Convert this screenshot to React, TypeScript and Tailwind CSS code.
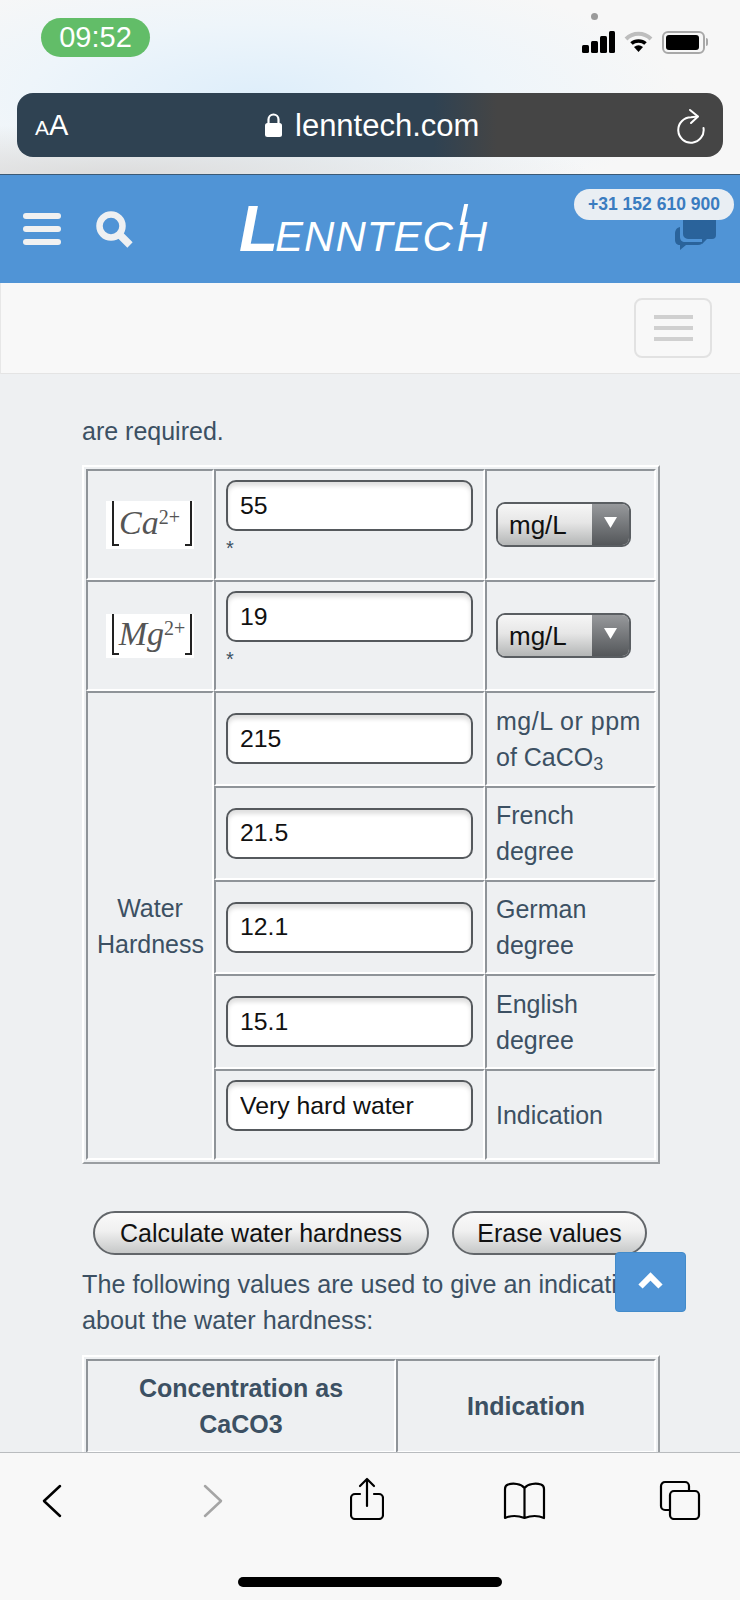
import React from 'react';

const cellCls = "border-2 border-t-[#8f9499] border-l-[#8f9499] border-r-white border-b-white p-[9px] text-[25px] leading-[36px] text-[#3c5063]";
const tableCls = "w-[578px] table-fixed border-separate border-spacing-0 border-2 border-t-white border-l-white border-r-[#9a9ea2] border-b-[#9a9ea2] p-[2px]";

function Input({ value }: { value: string }) {
  return (
    <input
      readOnly
      value={value}
      className="block w-[247px] h-[51px] rounded-[10px] border-2 border-[#55595d] bg-white px-[12px] text-[24.800px] text-[#111] shadow-[inset_0_4px_4px_rgba(0,0,0,0.13)] outline-none"
    />
  );
}

function Select() {
  return (
    <div className="flex h-[45px] w-[135px] overflow-hidden rounded-[9px] border-2 border-[#5a5e62] text-[26px] text-[#111]">
      <div className="flex flex-1 items-center bg-[linear-gradient(#f6f6f6,#e6e6e6_45%,#b4b6b6)] pl-[11px]">mg/L</div>
      <div className="flex w-[37px] items-start justify-center bg-[linear-gradient(#97999c,#54575a)] pt-[13px]">
        <svg width="13" height="11" viewBox="0 0 13 11"><path d="M0 0h13L6.500 11z" fill="#fff" /></svg>
      </div>
    </div>
  );
}

function Formula({ base, h }: { base: string; h: string }) {
  return (
    <div className={`mx-auto flex w-[88px] items-stretch bg-white pb-[3px] pl-[6px] pr-[2px] font-['Liberation_Serif',serif] text-[#555] ${h}`}>
      <span className="w-[7px] border-b-2 border-l-2 border-[#222]" />
      <span className="flex-1 self-center whitespace-nowrap text-[34px] italic leading-none">
        {base}
        <sup className="text-[20px] not-italic">2+</sup>
      </span>
      <span className="w-[7px] border-b-2 border-r-2 border-[#222]" />
    </div>
  );
}

function HardnessRow({ value, unit, h }: { value: string; unit: React.ReactNode; h: string }) {
  return (
    <>
      <td className={`${cellCls} ${h} pl-[10px]`}><Input value={value} /></td>
      <td className={`${cellCls} ${h} text-[25.500px]`}>{unit}</td>
    </>
  );
}

function StatusIcons() {
  return (
    <div className="flex items-center gap-[9px]">
      <svg width="33" height="22" viewBox="0 0 33 22" fill="#000">
        <rect x="0" y="14" width="7" height="8" rx="1.500" />
        <rect x="9" y="10" width="7" height="12" rx="1.500" />
        <rect x="18" y="5" width="7" height="17" rx="1.500" />
        <rect x="27" y="0" width="6" height="22" rx="1.500" />
      </svg>
      <svg width="29" height="22" viewBox="0 0 29 22" fill="none">
        <path d="M2 8C9 1 20 1 27 8" stroke="#bdbdbd" strokeWidth="4" />
        <path d="M7.500 12.500C11 9 18 9 21.500 12.500" stroke="#000" strokeWidth="3.500" />
        <path d="M10 16Q14.500 12.500 19 16L14.500 21z" fill="#000" />
      </svg>
      <div className="flex items-center">
        <div className="h-[23px] w-[43px] rounded-[6px] border-2 border-[#a8a8a8] p-[2px]">
          <div className="h-full w-[33px] rounded-[3px] bg-black" />
        </div>
        <div className="ml-[1px] h-[8px] w-[2px] rounded-r bg-[#a8a8a8]" />
      </div>
    </div>
  );
}

export default function App() {
  return (
    <div className="relative h-[1600px] w-[740px] overflow-hidden bg-[#eef0f2] font-['Liberation_Sans',Arial,sans-serif]">
      {/* safari top */}
      <div className="relative h-[175px] border-b border-[#3c5a75] bg-[radial-gradient(ellipse_480px_50px_at_15%_100%,#dcdcdc_0%,rgba(220,220,220,0)_100%),radial-gradient(ellipse_420px_130px_at_35%_55%,#deeefa_0%,#eef5fa_55%,#f7f7f7_100%)] px-[17px] pt-[18px]">
        <div className="flex h-[39px] items-center justify-between pl-[24px] pr-[15px]">
          <div className="flex h-[39px] w-[109px] items-center justify-center rounded-full bg-[#62bd68] text-[29px] text-white">09:52</div>
          <div className="mt-[9px]"><StatusIcons /></div>
        </div>
        <div className="absolute left-[591px] top-[13px] h-[7px] w-[7px] rounded-full bg-[#9a9a9a]" />
        <div className="mt-[36px] flex h-[64px] w-[706px] items-center rounded-[16px] bg-[linear-gradient(90deg,#2f4252_0%,#2f4252_59%,#454545_68%,#454545_100%)] text-white">
          <div className="flex w-[248px] items-baseline pl-[18px]">
            <span className="text-[21px] leading-none">A</span>
            <span className="text-[29px] leading-none">A</span>
          </div>
          <svg width="17" height="24" viewBox="0 0 17 24" fill="#fff">
            <path d="M3.500 11V6.500a5 5 0 0 1 10 0V11" fill="none" stroke="#fff" strokeWidth="2.200" />
            <rect x="0" y="10" width="17" height="14" rx="2.500" />
          </svg>
          <span className="ml-[13px] text-[31px] leading-none">lenntech.com</span>
          <svg className="ml-auto mr-[17px] mt-[2px]" width="29" height="36" viewBox="0 0 29 36" fill="none" stroke="#fff" strokeWidth="2" strokeLinecap="round" strokeLinejoin="round">
            <path d="M13 2l8 6.500-7 6.500" />
            <path d="M20.500 8.500L14 9.300A12.700 12.700 0 1 0 26.500 20" />
          </svg>
        </div>
      </div>

      {/* site header */}
      <div className="relative flex h-[108px] items-center bg-[#5094d6] text-white">
        <div className="ml-[23px] flex w-[38px] flex-col gap-[7px]">
          <span className="h-[6px] rounded-[3px] bg-[#f1f1f1]" />
          <span className="h-[6px] rounded-[3px] bg-[#f1f1f1]" />
          <span className="h-[6px] rounded-[3px] bg-[#f1f1f1]" />
        </div>
        <svg className="ml-[35px]" width="37" height="37" viewBox="0 0 37 37" fill="none" stroke="#eef0f2">
          <circle cx="15" cy="15" r="11.500" strokeWidth="6.500" />
          <path d="M24 24l10 10" strokeWidth="7.500" />
        </svg>
        <div className="ml-[106px] mt-[-1px] flex items-baseline whitespace-nowrap italic leading-none text-white">
          <span className="text-[64px] font-bold tracking-[-3px]">L</span>
          <span className="text-[42px] tracking-[1px]">ENNTEC</span>
          <span className="relative ml-[3px] text-[42px]">
            H
            <span className="absolute left-[5px] top-[-12px] h-[21px] w-[4px] -skew-x-12 bg-white" />
          </span>
        </div>
        <div className="absolute left-[574px] top-[14px] z-10 flex h-[31px] w-[160px] items-center justify-center rounded-full bg-[#e9eef3] text-[17.500px] font-bold text-[#3a7cc0]">+31 152 610 900</div>
        <svg className="absolute left-[675px] top-[45px]" width="43" height="31" viewBox="0 0 43 31" fill="#2a639b">
          <path d="M8 0H41V15a4 4 0 0 1-4 4H32l-5 5v-5H13a5 5 0 0 1-5-5z" />
          <path d="M5 7C1 8 0 11 0 14v6c0 3 2 5 5 5v5l6-5h12c3 0 4-1 5-3H10c-3 0-5-2-5-5z" />
        </svg>
      </div>

      {/* navbar */}
      <div className="flex h-[91px] justify-end border-b border-[#e4e4e4] border-l border-l-[#e7e7e7] bg-[#f8f8f8] pr-[28px] pt-[15px]">
        <div className="flex h-[60px] w-[78px] flex-col items-center justify-center gap-[7px] rounded-[8px] border-2 border-[#e2e2e2]">
          <span className="h-[4px] w-[39px] bg-[#d0d0d0]" />
          <span className="h-[4px] w-[39px] bg-[#d0d0d0]" />
          <span className="h-[4px] w-[39px] bg-[#d0d0d0]" />
        </div>
      </div>

      {/* content */}
      <div className="pl-[82px] text-[25px] leading-[36px] text-[#3c5063]">
        <p className="mt-[39px]">are required.</p>

        <table className={`mt-[16px] ${tableCls}`}>
          <colgroup>
            <col className="w-[128px]" />
            <col className="w-[271px]" />
            <col className="w-[171px]" />
          </colgroup>
          <tbody>
            <tr>
              <td className={`${cellCls} h-[111px]`}><Formula base="Ca" h="h-[48px]" /></td>
              <td className={`${cellCls} h-[111px] pl-[10px] align-top`}>
                <Input value="55" />
                <div className="mt-[6px] text-[20px] leading-[22px]">*</div>
              </td>
              <td className={`${cellCls} h-[111px]`}><Select /></td>
            </tr>
            <tr>
              <td className={`${cellCls} h-[111px]`}><Formula base="Mg" h="h-[44px]" /></td>
              <td className={`${cellCls} h-[111px] pl-[10px] align-top`}>
                <Input value="19" />
                <div className="mt-[6px] text-[20px] leading-[22px]">*</div>
              </td>
              <td className={`${cellCls} h-[111px]`}><Select /></td>
            </tr>
            <tr>
              <td rowSpan={5} className={`${cellCls} text-center text-[24.500px]`}>Water<br />Hardness</td>
              <HardnessRow value="215" h="h-[95px]" unit={<><span className="tracking-[0.500px]">mg/L or ppm</span><br />of CaCO<sub className="text-[18px]">3</sub></>} />
            </tr>
            <tr><HardnessRow value="21.5" h="h-[94px]" unit={<>French<br />degree</>} /></tr>
            <tr><HardnessRow value="12.1" h="h-[94px]" unit={<>German<br />degree</>} /></tr>
            <tr><HardnessRow value="15.1" h="h-[95px]" unit={<>English<br />degree</>} /></tr>
            <tr>
              <td className={`${cellCls} h-[91px] pl-[10px] align-top`}><Input value="Very hard water" /></td>
              <td className={`${cellCls} h-[91px] text-[25.500px]`}>Indication</td>
            </tr>
          </tbody>
        </table>

        <div className="ml-[11px] mt-[47px] flex gap-[23px]">
          <button className="h-[44px] w-[336px] rounded-full border-2 border-[#62666a] bg-[linear-gradient(#fafafa,#f0f0f0_45%,#c6c8c8)] text-[25px] text-[#111]">Calculate water hardness</button>
          <button className="h-[44px] w-[195px] rounded-full border-2 border-[#62666a] bg-[linear-gradient(#fafafa,#f0f0f0_45%,#c6c8c8)] text-[25px] text-[#111]">Erase values</button>
        </div>

        <p className="mt-[11px] w-[578px] text-[25.200px]">The following values are used to give an indication about the water hardness:</p>

        <table className={`mt-[17px] ${tableCls}`}>
          <colgroup>
            <col className="w-[310px]" />
            <col className="w-[260px]" />
          </colgroup>
          <tbody>
            <tr>
              <td className={`${cellCls} h-[92px] text-center font-bold`}>Concentration as<br />CaCO3</td>
              <td className={`${cellCls} h-[92px] text-center font-bold`}>Indication</td>
            </tr>
          </tbody>
        </table>
      </div>

      {/* back to top */}
      <div className="absolute left-[615px] top-[1252px] flex h-[60px] w-[71px] items-center justify-center rounded-[4px] border border-[#428bca] bg-[#4f94d6] pb-[4px]">
        <svg width="25" height="18" viewBox="0 0 25 18" fill="none" stroke="#fff" strokeWidth="6">
          <path d="M2.500 15.500l10-10 10 10" />
        </svg>
      </div>

      {/* safari toolbar */}
      <div className="absolute inset-x-0 bottom-0 h-[148px] border-t border-[#b9bcbf] bg-[#f8f8f8]">
        <div className="relative h-full">
          <svg className="absolute left-[42px] top-[31px]" width="20" height="34" viewBox="0 0 20 34" fill="none" stroke="#000" strokeWidth="2.500" strokeLinecap="round" strokeLinejoin="round"><path d="M18 2L2 17l16 15" /></svg>
          <svg className="absolute left-[203px] top-[31px]" width="20" height="34" viewBox="0 0 20 34" fill="none" stroke="#a5a5a5" strokeWidth="2.500" strokeLinecap="round" strokeLinejoin="round"><path d="M2 2l16 15L2 32" /></svg>
          <svg className="absolute left-[350px] top-[24px]" width="34" height="43" viewBox="0 0 34 43" fill="none" stroke="#000" strokeWidth="2.200" strokeLinecap="round" strokeLinejoin="round">
            <path d="M10 17H5a4 4 0 0 0-4 4v17a4 4 0 0 0 4 4h24a4 4 0 0 0 4-4V21a4 4 0 0 0-4-4h-5" />
            <path d="M17 29V2M10 9l7-7 7 7" />
          </svg>
          <svg className="absolute left-[503px] top-[29px]" width="43" height="38" viewBox="0 0 43 38" fill="none" stroke="#000" strokeWidth="2.200" strokeLinejoin="round">
            <path d="M21.500 6C18 1.500 10 1 5 2.500Q2 3.500 2 7v29q9-4 19.500 0Q32 32 41 36V7q0-3.500-3-4.500C33 1 25 1.500 21.500 6zV35" />
          </svg>
          <svg className="absolute left-[659px] top-[27px]" width="42" height="40" viewBox="0 0 42 40" fill="none" stroke="#000" strokeWidth="2.200">
            <path d="M10 30H6a4 4 0 0 1-4-4V6a4 4 0 0 1 4-4h20a4 4 0 0 1 4 4v4" />
            <rect x="11" y="11" width="29" height="28" rx="4" />
          </svg>
          <div className="absolute left-[238px] top-[124px] h-[10px] w-[264px] rounded-full bg-black" />
        </div>
      </div>
    </div>
  );
}
